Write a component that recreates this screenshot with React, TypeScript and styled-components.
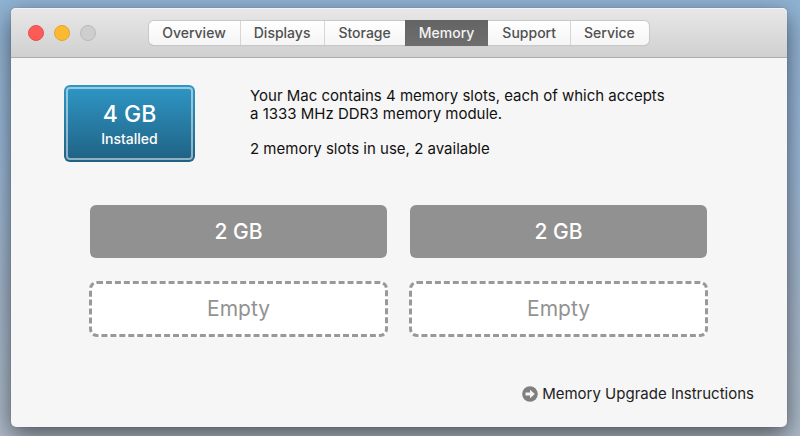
import React from "react";
import styled, { createGlobalStyle, css } from "styled-components";

const GlobalStyle = createGlobalStyle`
  *, *::before, *::after { box-sizing: border-box; }
  body {
    margin: 0;
    font-family: Inter, "Liberation Sans", sans-serif;
    color: #111;
  }
`;

const Desktop = styled.div`
  min-height: 100vh;
  display: flex;
  padding: 8px 13px 9px 11px;
  overflow: hidden;
  background: linear-gradient(180deg, #90b3d4 0%, #9ab8d8 35%, #a5b7cc 70%, #adbac8 100%);
`;

const Window = styled.main`
  flex: 1;
  display: flex;
  flex-direction: column;
  border-radius: 5px;
  background: #f6f6f6;
  box-shadow: 0 0 1px rgba(0, 0, 0, 0.45), 0 8px 24px rgba(0, 0, 0, 0.55);
`;

const TitleBar = styled.header`
  display: grid;
  grid-template-columns: 1fr auto 1fr;
  align-items: center;
  height: 50px;
  padding: 0 17px;
  border-bottom: 1px solid #acacac;
  border-radius: 5px 5px 0 0;
  background: linear-gradient(180deg, #e8e8e8, #d0d0d0);
  box-shadow: inset 0 1px 0 #f3f3f3;
`;

const WindowControls = styled.div`
  display: flex;
  gap: 10px;
`;

const ControlButton = styled.button<{ $fill: string; $edge: string }>`
  width: 16px;
  height: 16px;
  padding: 0;
  border: 1px solid ${(p) => p.$edge};
  border-radius: 50%;
  background: ${(p) => p.$fill};
`;

const Tabs = styled.nav`
  display: flex;
  height: 24px;
  border-radius: 5px;
  background: linear-gradient(180deg, #fff, #f5f5f5);
  box-shadow: 0 0 0 1px #c8c8c8, 0 1px 1px #aaa;
`;

const Tab = styled.button<{ $active: boolean }>`
  padding: 0 14px 0 13px;
  border: 0;
  border-left: 1px solid #d6d6d6;
  background: transparent;
  color: #505050;
  font: 500 14px/24px Inter, "Liberation Sans", sans-serif;

  &:first-child { border-left: 0; }

  ${(p) =>
    p.$active &&
    css`
      margin: -1px 0;
      border-color: #666;
      background: linear-gradient(180deg, #646464, #6e6e6e);
      color: #f4f4f4;

      & + button { border-left-color: transparent; }
    `}
`;

const Content = styled.div`
  flex: 1;
  display: flex;
  flex-direction: column;
  padding: 27px 33px 23px 53px;
`;

const Summary = styled.section`
  display: flex;
  gap: 55px;
`;

const Badge = styled.div`
  width: 131px;
  height: 77px;
  padding: 2px;
  border-radius: 6px;
  background: linear-gradient(180deg, #2f97c6, #1f6183);
`;

const BadgeFace = styled.div`
  height: 100%;
  display: flex;
  flex-direction: column;
  align-items: center;
  justify-content: center;
  padding-top: 2px;
  border: 2px solid rgba(255, 255, 255, 0.5);
  border-radius: 4px;
  color: #fff;
`;

const BadgeAmount = styled.strong`
  font-size: 23px;
  font-weight: 500;
  line-height: 28px;
`;

const BadgeCaption = styled.span`
  font-size: 14px;
  font-weight: 500;
  line-height: 22px;
`;

const Description = styled.div`
  padding-top: 2px;
  font-size: 15px;
  line-height: 18px;

  p { margin: 0 0 17px; }
`;

const SlotGrid = styled.ul`
  display: grid;
  grid-template-columns: 1fr 1fr;
  gap: 23px 21px;
  margin: 30px 46px 0 25px;
  padding: 0;
  list-style: none;
`;

const Slot = styled.li<{ $empty: boolean }>`
  display: flex;
  align-items: center;
  justify-content: center;
  font-size: 21px;
  line-height: 28px;

  ${(p) =>
    p.$empty
      ? css`
          height: 56px;
          border: 3px dashed #999;
          border-radius: 8px;
          background: #fff;
          color: #929292;
        `
      : css`
          height: 53px;
          margin: 0 1px;
          border-radius: 6px;
          background: #919191;
          color: #fff;
          font-weight: 500;
        `}
`;

const UpgradeLink = styled.a`
  display: flex;
  align-items: center;
  gap: 4px;
  margin: auto 0 0 auto;
  color: #222;
  font-size: 15px;
  line-height: 20px;
  text-decoration: none;
`;

const ArrowIcon = () => (
  <svg width="16" height="16" viewBox="0 0 16 16" aria-hidden="true">
    <circle cx="8" cy="8" r="7.8" fill="#7f7f7f" />
    <path d="M3.5 6.6H8V3.8L12.8 8L8 12.2V9.4H3.5Z" fill="#f6f6f6" />
  </svg>
);

const tabs = ["Overview", "Displays", "Storage", "Memory", "Support", "Service"];
const slots = ["2 GB", "2 GB", null, null];

export default function App() {
  return (
    <>
      <GlobalStyle />
      <Desktop>
        <Window>
          <TitleBar>
            <WindowControls>
              <ControlButton aria-label="Close" $fill="#fc5b57" $edge="#e8504c" />
              <ControlButton aria-label="Minimize" $fill="#fdb932" $edge="#e5a42b" />
              <ControlButton aria-label="Zoom" disabled $fill="#cecece" $edge="#b9b9b9" />
            </WindowControls>
            <Tabs>
              {tabs.map((tab) => (
                <Tab key={tab} type="button" $active={tab === "Memory"}>
                  {tab}
                </Tab>
              ))}
            </Tabs>
          </TitleBar>
          <Content>
            <Summary>
              <Badge>
                <BadgeFace>
                  <BadgeAmount>4 GB</BadgeAmount>
                  <BadgeCaption>Installed</BadgeCaption>
                </BadgeFace>
              </Badge>
              <Description>
                <p>
                  Your Mac contains 4 memory slots, each of which accepts
                  <br />a 1333 MHz DDR3 memory module.
                </p>
                <p>2 memory slots in use, 2 available</p>
              </Description>
            </Summary>
            <SlotGrid>
              {slots.map((size, index) => (
                <Slot key={index} $empty={size === null}>
                  {size ?? "Empty"}
                </Slot>
              ))}
            </SlotGrid>
            <UpgradeLink href="#upgrade">
              <ArrowIcon />
              Memory Upgrade Instructions
            </UpgradeLink>
          </Content>
        </Window>
      </Desktop>
    </>
  );
}
